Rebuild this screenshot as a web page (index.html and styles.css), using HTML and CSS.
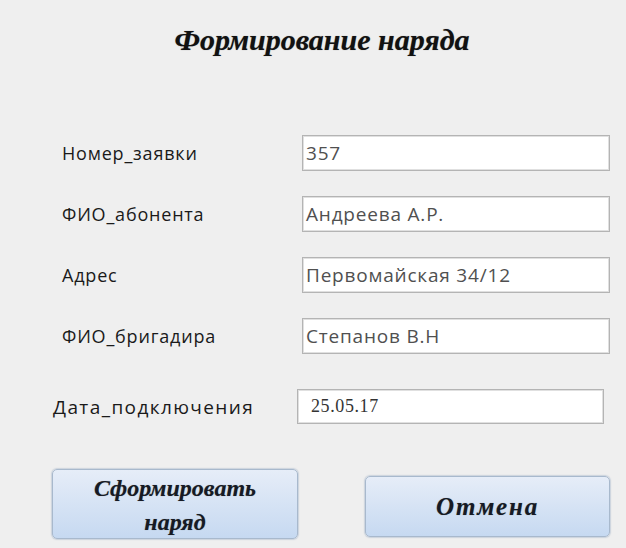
FILE: index.html
```html
<!DOCTYPE html>
<html lang="ru">
<head>
<meta charset="utf-8">
<title>Формирование наряда</title>
<link rel="stylesheet" href="styles.css">
</head>
<body>
<div class="form">
  <h1 class="title">Формирование наряда</h1>

  <div class="fields">
    <div class="row">
      <span class="label">Номер_заявки</span>
      <div class="field">357</div>
    </div>
    <div class="row">
      <span class="label">ФИО_абонента</span>
      <div class="field">Андреева А.Р.</div>
    </div>
    <div class="row">
      <span class="label">Адрес</span>
      <div class="field">Первомайская 34/12</div>
    </div>
    <div class="row">
      <span class="label">ФИО_бригадира</span>
      <div class="field">Степанов В.Н</div>
    </div>
  </div>

  <div class="row row-date">
    <span class="label">Дата_подключения</span>
    <div class="field field-date">25.05.17</div>
  </div>

  <div class="actions">
    <button class="btn btn-make">Сформировать<br>наряд</button>
    <button class="btn btn-cancel">Отмена</button>
  </div>
</div>
</body>
</html>
```

FILE: styles.css
```css
html, body {
  margin: 0;
  padding: 0;
  background: #efefef;
}

.form {
  width: 626px;
  height: 548px;
  box-sizing: border-box;
  padding: 22px 16px 0 0;
  display: flex;
  flex-direction: column;
  font-family: "Open Sans", "Liberation Sans", sans-serif;
  color: #222;
}

.title {
  margin: 0;
  padding-left: 34px;
  height: 36px;
  line-height: 36px;
  text-align: center;
  font-family: "Liberation Serif", serif;
  font-style: italic;
  font-weight: bold;
  font-size: 30px;
  color: #111;
  text-shadow: 0 0 1px rgba(0, 0, 0, 0.4);
}

.fields {
  margin-top: 77px;
  display: flex;
  flex-direction: column;
  gap: 25px;
}

.row {
  display: flex;
  align-items: center;
  height: 36px;
  padding-left: 62px;
}

.label {
  width: 240px;
  font-size: 18px;
  letter-spacing: 0.8px;
  color: #1a1a1a;
}

.field {
  flex: 1;
  height: 36px;
  box-sizing: border-box;
  background: #fff;
  border: 1px solid #b4b4b4;
  box-shadow: inset 0 0 0 1px #e0e0e0;
  padding: 0 0 0 3px;
  display: flex;
  align-items: center;
  font-size: 19px;
  letter-spacing: 0.8px;
  color: #505050;
}

.row-date {
  margin-top: 35px;
  padding-left: 53px;
  height: 35px;
}

.row-date .label {
  width: 244px;
  font-size: 19px;
  letter-spacing: 1.4px;
}

.field-date {
  flex: none;
  width: 307px;
  height: 35px;
  padding-left: 13px;
  font-family: "Liberation Serif", serif;
  font-size: 18px;
  letter-spacing: 0.6px;
  color: #333;
}

.actions {
  margin-top: 45px;
  padding-left: 52px;
  display: flex;
  align-items: flex-start;
}

.btn {
  box-sizing: border-box;
  border: 1px solid #a8b9cd;
  border-radius: 5px;
  background: linear-gradient(#e6edf8, #c6d9f1);
  box-shadow: 0 0 1px 1px rgba(170, 185, 205, 0.5);
  font-family: "Liberation Serif", serif;
  font-style: italic;
  font-weight: bold;
  font-size: 24px;
  line-height: 34px;
  color: #161a24;
  text-shadow: 0 0 1px rgba(0, 0, 0, 0.35);
  padding: 0;
  cursor: pointer;
}

.btn-make {
  width: 246px;
  height: 70px;
  padding-top: 1px;
  overflow: hidden;
}

.btn-cancel {
  margin-left: 67px;
  margin-top: 7px;
  width: 245px;
  height: 61px;
  font-size: 25px;
  letter-spacing: 1.8px;
}
```
